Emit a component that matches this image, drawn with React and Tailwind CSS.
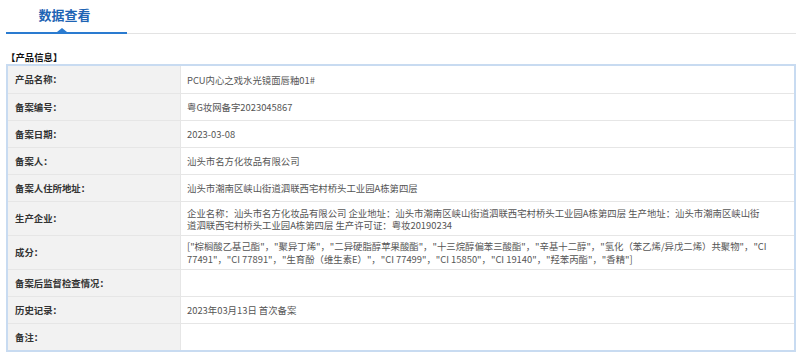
import React from "react";

const rows = [
  { label: "产品名称：", value: "PCU内心之戏水光镜面唇釉01#" },
  { label: "备案编号：", value: "粤G妆网备字2023045867" },
  { label: "备案日期：", value: "2023-03-08" },
  { label: "备案人：", value: "汕头市名方化妆品有限公司" },
  { label: "备案人住所地址：", value: "汕头市潮南区峡山街道泗联西宅村桥头工业园A栋第四层" },
  {
    label: "生产企业：",
    value:
      "企业名称：汕头市名方化妆品有限公司 企业地址：汕头市潮南区峡山街道泗联西宅村桥头工业园A栋第四层 生产地址：汕头市潮南区峡山街道泗联西宅村桥头工业园A栋第四层 生产许可证：粤妆20190234",
    tall: true,
  },
  {
    label: "成分：",
    lines: [
      '["棕榈酸乙基己酯"，"聚异丁烯"，"二异硬脂醇苹果酸酯"，"十三烷醇偏苯三酸酯"，"辛基十二醇"，"氢化（苯乙烯/异戊二烯）共聚物"，"CI',
      '77491"，"CI 77891"，"生育酚（维生素E）"，"CI 77499"，"CI 15850"，"CI 19140"，"羟苯丙酯"，"香精"]',
    ],
    tall: true,
  },
  { label: "备案后监督检查情况：", value: "" },
  { label: "历史记录：", value: "2023年03月13日 首次备案" },
  { label: "备注：", value: "" },
];

export default function App() {
  return (
    <div className="w-[800px] h-[362px] bg-white pl-[6px] pr-[4px] overflow-hidden font-['Noto_Sans_CJK_SC','Noto_Sans',sans-serif]">
      {/* Tab header */}
      <div className="flex items-end h-[34px]">
        <div className="relative w-[121px] h-full border-b-2 border-[#2a7bd0] flex justify-center">
          <span className="text-[13px] font-bold text-[#1e64b4] leading-none mt-[8px] -ml-[4px]">数据查看</span>
          <span className="absolute left-[51px] bottom-0 w-0 h-0 border-l-[5px] border-r-[5px] border-b-[4px] border-l-transparent border-r-transparent border-b-[#2a7bd0]"></span>
        </div>
        <div className="flex-1 border-b border-[#e3e3e3]"></div>
      </div>

      <div className="mt-[17px] text-[9.4px] font-bold text-[#111] leading-[12px]">【产品信息】</div>

      <div className="mt-[1px] border-2 border-[#c8dbf1] text-[9.4px]">
        {rows.map((r, i) => (
          <div
            key={i}
            className={`flex ${i > 0 ? "border-t border-[#e6e6e6]" : ""} ${r.tall ? "h-[34px]" : "h-[27px]"}`}
          >
            <div className="w-[173px] shrink-0 bg-[#f2f2f2] border-r border-[#e6e6e6] pl-[7px] flex items-center font-bold text-[#333]">
              {r.label}
            </div>
            <div className="flex-1 min-w-0 pl-[6px] pr-[34px] text-[#555] flex items-center">
              {r.lines ? (
                <p className="leading-[13px]">
                  <span className="block whitespace-nowrap">{r.lines[0]}</span>
                  <span className="block whitespace-nowrap">{r.lines[1]}</span>
                </p>
              ) : (
                <p className="leading-[12px]">{r.value}</p>
              )}
            </div>
          </div>
        ))}
      </div>
    </div>
  );
}
